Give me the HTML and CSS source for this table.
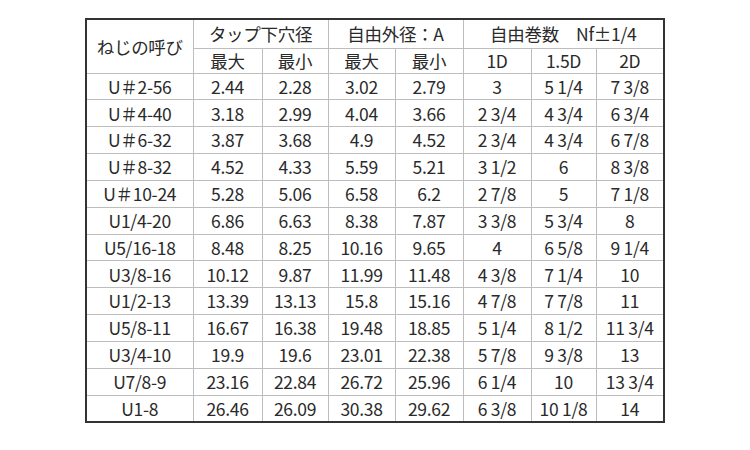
FILE: index.html
```html
<!DOCTYPE html>
<html lang="ja">
<head>
<meta charset="utf-8">
<link rel="stylesheet" href="styles.css">
</head>
<body>
<div class="page">
<table class="spec">
<colgroup>
<col class="c0"><col class="c1"><col class="c2"><col class="c3"><col class="c4"><col class="c5"><col class="c6"><col class="c7">
</colgroup>
<thead>
<tr class="h1"><th rowspan="2">ねじの呼び</th><th colspan="2">タップ下穴径</th><th colspan="2">自由外径：A</th><th colspan="3">自由巻数　Nf±1/4</th></tr>
<tr class="h2"><th>最大</th><th>最小</th><th>最大</th><th>最小</th><th>1D</th><th>1.5D</th><th>2D</th></tr>
</thead>
<tbody>
<tr><td>U＃2-56</td><td>2.44</td><td>2.28</td><td>3.02</td><td>2.79</td><td>3</td><td>5 1/4</td><td>7 3/8</td></tr>
<tr><td>U＃4-40</td><td>3.18</td><td>2.99</td><td>4.04</td><td>3.66</td><td>2 3/4</td><td>4 3/4</td><td>6 3/4</td></tr>
<tr><td>U＃6-32</td><td>3.87</td><td>3.68</td><td>4.9</td><td>4.52</td><td>2 3/4</td><td>4 3/4</td><td>6 7/8</td></tr>
<tr><td>U＃8-32</td><td>4.52</td><td>4.33</td><td>5.59</td><td>5.21</td><td>3 1/2</td><td>6</td><td>8 3/8</td></tr>
<tr><td>U＃10-24</td><td>5.28</td><td>5.06</td><td>6.58</td><td>6.2</td><td>2 7/8</td><td>5</td><td>7 1/8</td></tr>
<tr><td>U1/4-20</td><td>6.86</td><td>6.63</td><td>8.38</td><td>7.87</td><td>3 3/8</td><td>5 3/4</td><td>8</td></tr>
<tr><td>U5/16-18</td><td>8.48</td><td>8.25</td><td>10.16</td><td>9.65</td><td>4</td><td>6 5/8</td><td>9 1/4</td></tr>
<tr><td>U3/8-16</td><td>10.12</td><td>9.87</td><td>11.99</td><td>11.48</td><td>4 3/8</td><td>7 1/4</td><td>10</td></tr>
<tr><td>U1/2-13</td><td>13.39</td><td>13.13</td><td>15.8</td><td>15.16</td><td>4 7/8</td><td>7 7/8</td><td>11</td></tr>
<tr><td>U5/8-11</td><td>16.67</td><td>16.38</td><td>19.48</td><td>18.85</td><td>5 1/4</td><td>8 1/2</td><td>11 3/4</td></tr>
<tr><td>U3/4-10</td><td>19.9</td><td>19.6</td><td>23.01</td><td>22.38</td><td>5 7/8</td><td>9 3/8</td><td>13</td></tr>
<tr><td>U7/8-9</td><td>23.16</td><td>22.84</td><td>26.72</td><td>25.96</td><td>6 1/4</td><td>10</td><td>13 3/4</td></tr>
<tr><td>U1-8</td><td>26.46</td><td>26.09</td><td>30.38</td><td>29.62</td><td>6 3/8</td><td>10 1/8</td><td>14</td></tr>
</tbody>
</table>
</div>
</body>
</html>
```

FILE: styles.css
```css
html, body {
  margin: 0;
  padding: 0;
  background: #ffffff;
}
.page {
  padding: 18px 0 0 85px;
}
.spec {
  border-collapse: collapse;
  table-layout: fixed;
  width: 578px;
  border: 2px solid #333333;
  font-family: "Noto Sans CJK JP", "Noto Sans", sans-serif;
  font-size: 17.5px;
  color: #2a2a2a;
}
.c0 { width: 107px; }
.c1 { width: 69px; }
.c2 { width: 66px; }
.c3 { width: 67px; }
.c4 { width: 68px; }
.c5 { width: 68px; }
.c6 { width: 65px; }
.c7 { width: 68px; }
.spec th, .spec td {
  border: 1px solid #bdbdbd;
  padding: 0;
  text-align: center;
  font-weight: normal;
  line-height: 1;
  white-space: nowrap;
  letter-spacing: -0.3px;
}
.spec .h1 { height: 29px; }
.spec .h2 { height: 25px; }
.spec tbody tr { height: 26.85px; }
```
